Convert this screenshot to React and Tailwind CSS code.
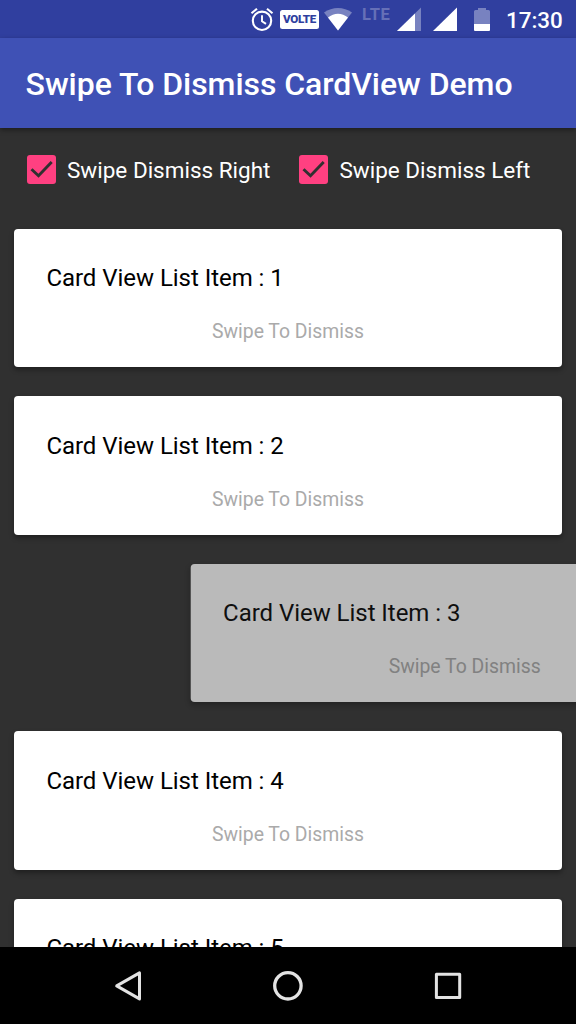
import React from "react";

function StatusBar() {
  return (
    <div className="flex h-[38px] shrink-0 items-start bg-[#303f9f] pl-[250px] text-white">
      <svg className="mt-[7px] h-[25px] w-6 shrink-0" viewBox="0 0 24 25" fill="none" stroke="currentColor" strokeWidth="2.1">
        <circle cx="12" cy="13.8" r="9.2" />
        <path d="M12 8.2v6l4 2.7" strokeWidth="1.9" />
        <path d="M1.5 6.2 7 1.7M22.5 6.2 17 1.7" />
      </svg>
      <div className="ml-[6px] mt-[10px] flex h-[19px] w-[39px] shrink-0 items-center justify-center rounded-[2.5px] bg-white">
        <span className="text-[11.6px] leading-[19px] font-black tracking-[-0.3px] text-[#303f9f]">VOLTE</span>
      </div>
      <svg className="ml-[5px] mt-[8px] h-[23px] w-[28px] shrink-0" viewBox="0 0 28 23" fill="currentColor">
        <path d="M0 4.5C8.2-1.5 19.8-1.5 28 4.5L14 22.5Z" opacity=".35" />
        <path d="M4 9.5C10 4.4 18 4.4 24 9.5L14 22.5Z" />
      </svg>
      <span className="ml-[10px] mt-[6px] w-[31px] shrink-0 text-[16.5px] leading-[18px] font-bold tracking-[0.6px] text-[#6670b7]">LTE</span>
      <svg className="ml-[4px] mt-[7px] h-6 w-6 shrink-0" viewBox="0 0 24 24" fill="currentColor">
        <path d="M0 24 24 .5V24Z" opacity=".35" />
        <path d="M0 24 18 6.4V24Z" />
      </svg>
      <svg className="ml-[12px] mt-[7px] h-6 w-6 shrink-0" viewBox="0 0 24 24" fill="currentColor">
        <path d="M0 24 24 .5V24Z" />
      </svg>
      <svg className="ml-[17px] mt-[8px] h-[23px] w-4 shrink-0" viewBox="0 0 16 23" fill="currentColor">
        <path d="M1.5 2H4V0H12V2H14.5Q16 2 16 3.5V16H0V3.5Q0 2 1.5 2Z" opacity=".35" />
        <path d="M0 16H16V22Q16 23 15 23H1Q0 23 0 22Z" />
      </svg>
      <span className="ml-[16px] mt-[7px] text-[22.4px] leading-[26px] font-medium">17:30</span>
    </div>
  );
}

function Option({ label }) {
  return (
    <label className="flex items-center">
      <svg className="h-[29px] w-[29px] shrink-0" viewBox="0 0 29 29">
        <rect width="29" height="29" rx="3" fill="#ff4081" />
        <path d="m4.5 14.2 7 6.5L24.7 6.9" fill="none" stroke="#303030" strokeWidth="2.9" />
      </svg>
      <span className="ml-[11px] pt-[2px] text-[22.5px] leading-[27px]">{label}</span>
    </label>
  );
}

function Card({ number, swiped }) {
  return (
    <article
      className={
        "flex h-[138.5px] w-[547.2px] shrink-0 flex-col rounded-[4px] bg-white pt-[35.5px] shadow-[0_3px_5px_rgba(0,0,0,0.35)] " +
        (swiped ? "translate-x-[176.7px] opacity-[0.665]" : "")
      }
    >
      <h2 className="pl-8 text-[24px] leading-7 tracking-[-0.04px] text-black">Card View List Item : {number}</h2>
      <p className="mt-[28px] text-center text-[19.4px] leading-[23px] text-[#aaaaaa]">Swipe To Dismiss</p>
    </article>
  );
}

function NavigationBar() {
  return (
    <nav className="flex h-[77px] shrink-0 items-center justify-center gap-[128px] bg-black text-[#e3e3e3]">
      <svg className="h-8 w-8" viewBox="0 0 32 32" fill="none" stroke="currentColor" strokeWidth="3" strokeLinejoin="round">
        <path d="M27.5 2.9V28.9L4.7 15.9Z" />
      </svg>
      <svg className="h-8 w-8" viewBox="0 0 32 32" fill="none" stroke="currentColor" strokeWidth="3.3">
        <circle cx="15.9" cy="15.8" r="13.2" />
      </svg>
      <svg className="h-8 w-8" viewBox="0 0 32 32" fill="none" stroke="currentColor" strokeWidth="3" strokeLinejoin="round">
        <rect x="4.4" y="4.3" width="23.3" height="23.3" />
      </svg>
    </nav>
  );
}

export default function App() {
  return (
    <div className="flex h-[1024px] w-[576px] flex-col overflow-hidden bg-[#303030] font-['Roboto',sans-serif] text-white">
      <StatusBar />
      <header className="z-10 flex h-[90px] shrink-0 items-center bg-[#3f51b5] pl-[25.6px] pt-[1px] shadow-[0_2px_5px_rgba(0,0,0,0.4)]">
        <h1 className="text-[32px] leading-10 font-medium tracking-[-0.05px]">Swipe To Dismiss CardView Demo</h1>
      </header>
      <main className="flex min-h-0 flex-1 flex-col overflow-hidden">
        <div className="flex h-[83px] shrink-0 items-center gap-[29px] pl-[27px]">
          <Option label="Swipe Dismiss Right" />
          <Option label="Swipe Dismiss Left" />
        </div>
        <div className="flex flex-col gap-[29px] pl-[14.4px] pt-[17.7px]">
          <Card number={1} />
          <Card number={2} />
          <Card number={3} swiped />
          <Card number={4} />
          <Card number={5} />
        </div>
      </main>
      <NavigationBar />
    </div>
  );
}
